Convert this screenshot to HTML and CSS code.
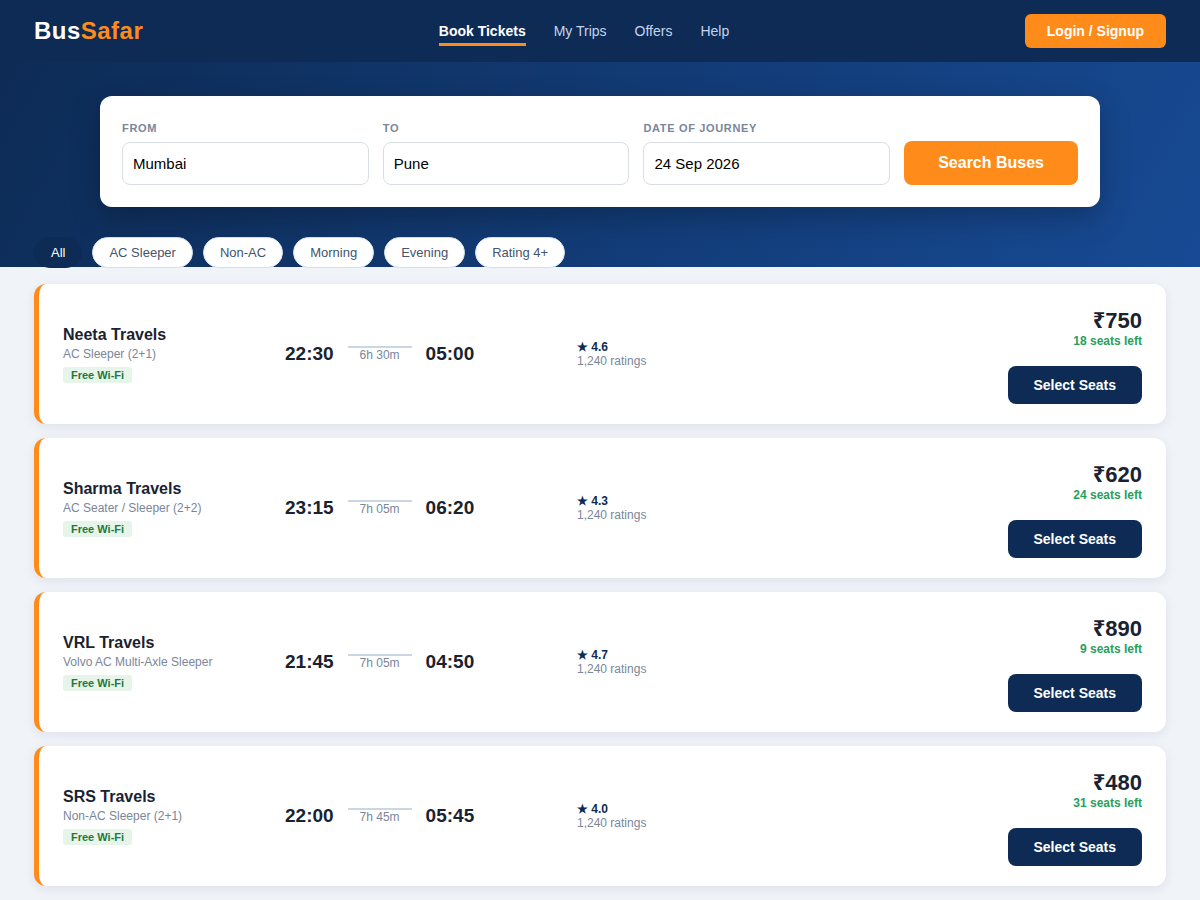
FILE: index.html
```html
<!DOCTYPE html>
<html lang="en">
<head>
    <meta charset="UTF-8">
    <meta name="viewport" content="width=device-width, initial-scale=1.0">
    <title>BusSafar</title>
    <link rel="stylesheet" href="styles.css">
</head>
<body>
    <header class="topbar">
        <div class="logo">Bus<span>Safar</span></div>
        <nav class="nav">
            <a class="active" href="#">Book Tickets</a>
            <a href="#">My Trips</a>
            <a href="#">Offers</a>
            <a href="#">Help</a>
        </nav>
        <button class="login" type="button">Login / Signup</button>
    </header>

    <section class="hero">
        <form class="search">
            <div class="field">
                <label for="from">From</label>
                <input id="from" type="text" value="Mumbai">
            </div>
            <div class="field">
                <label for="to">To</label>
                <input id="to" type="text" value="Pune">
            </div>
            <div class="field">
                <label for="date">Date of Journey</label>
                <input id="date" type="text" value="24 Sep 2026">
            </div>
            <button class="search-btn" type="button">Search Buses</button>
        </form>
    </section>

    <div class="filters">
        <button class="chip on" type="button">All</button>
        <button class="chip" type="button">AC Sleeper</button>
        <button class="chip" type="button">Non-AC</button>
        <button class="chip" type="button">Morning</button>
        <button class="chip" type="button">Evening</button>
        <button class="chip" type="button">Rating 4+</button>
    </div>

    <main class="list">
        <article class="bus">
            <div class="operator">
                <h3>Neeta Travels</h3>
                <p>AC Sleeper (2+1)</p>
                <span class="tag">Free Wi-Fi</span>
            </div>
            <div class="times">
                <b>22:30</b>
                <div class="duration">6h 30m</div>
                <b>05:00</b>
            </div>
            <div class="rating"><b>★ 4.6</b>1,240 ratings</div>
            <div class="fare">
                <div class="price">₹750</div>
                <div class="seats">18 seats left</div>
                <button class="select" type="button">Select Seats</button>
            </div>
        </article>

        <article class="bus">
            <div class="operator">
                <h3>Sharma Travels</h3>
                <p>AC Seater / Sleeper (2+2)</p>
                <span class="tag">Free Wi-Fi</span>
            </div>
            <div class="times">
                <b>23:15</b>
                <div class="duration">7h 05m</div>
                <b>06:20</b>
            </div>
            <div class="rating"><b>★ 4.3</b>1,240 ratings</div>
            <div class="fare">
                <div class="price">₹620</div>
                <div class="seats">24 seats left</div>
                <button class="select" type="button">Select Seats</button>
            </div>
        </article>

        <article class="bus">
            <div class="operator">
                <h3>VRL Travels</h3>
                <p>Volvo AC Multi-Axle Sleeper</p>
                <span class="tag">Free Wi-Fi</span>
            </div>
            <div class="times">
                <b>21:45</b>
                <div class="duration">7h 05m</div>
                <b>04:50</b>
            </div>
            <div class="rating"><b>★ 4.7</b>1,240 ratings</div>
            <div class="fare">
                <div class="price">₹890</div>
                <div class="seats">9 seats left</div>
                <button class="select" type="button">Select Seats</button>
            </div>
        </article>

        <article class="bus">
            <div class="operator">
                <h3>SRS Travels</h3>
                <p>Non-AC Sleeper (2+1)</p>
                <span class="tag">Free Wi-Fi</span>
            </div>
            <div class="times">
                <b>22:00</b>
                <div class="duration">7h 45m</div>
                <b>05:45</b>
            </div>
            <div class="rating"><b>★ 4.0</b>1,240 ratings</div>
            <div class="fare">
                <div class="price">₹480</div>
                <div class="seats">31 seats left</div>
                <button class="select" type="button">Select Seats</button>
            </div>
        </article>
    </main>
</body>
</html>
```

FILE: styles.css
```css
* {
    box-sizing: border-box;
    margin: 0;
    padding: 0;
}

body {
    background: #f0f3f8;
    color: #1a2230;
    font-family: "Liberation Sans", Arial, sans-serif;
}

button, input {
    font-family: inherit;
}

button {
    border: none;
    cursor: pointer;
}

/* Top bar */

.topbar {
    align-items: center;
    background: #0d2b55;
    display: flex;
    justify-content: space-between;
    padding: 14px 34px;
}

.logo {
    color: #fff;
    font-size: 24px;
    font-weight: bold;
    letter-spacing: 0.02em;
    line-height: 28px;
}

.logo span {
    color: #ff8c1a;
}

.nav {
    display: flex;
    gap: 28px;
}

.nav a {
    border-bottom: 3px solid transparent;
    color: #c5d4ec;
    font-size: 14px;
    line-height: 16px;
    padding: 7px 0 4px;
    text-decoration: none;
}

.nav a.active {
    border-color: #ff8c1a;
    color: #fff;
    font-weight: bold;
}

.login {
    background: #ff8c1a;
    border-radius: 6px;
    color: #fff;
    font-size: 14px;
    font-weight: bold;
    line-height: 16px;
    padding: 9px 22px;
}

/* Search */

.hero {
    background: linear-gradient(120deg, #0d2b55, #174a94);
    padding: 34px 34px 60px;
}

.search {
    align-items: end;
    background: #fff;
    border-radius: 12px;
    box-shadow: 0 10px 30px rgba(0, 0, 0, 0.25);
    display: grid;
    gap: 14px;
    grid-template-columns: 1fr 1fr 1fr auto;
    margin: 0 auto;
    max-width: 1000px;
    padding: 22px;
}

.field label {
    color: #7a869a;
    display: block;
    font-size: 11px;
    font-weight: bold;
    letter-spacing: 0.06em;
    line-height: 20px;
    margin-bottom: 4px;
    text-transform: uppercase;
}

.field input {
    background: #fff;
    border: 1px solid #d9dee4;
    border-radius: 8px;
    color: #000;
    display: block;
    font-size: 15px;
    height: 43px;
    padding: 0 10px;
    width: 100%;
}

.search-btn {
    background: #ff8c1a;
    border-radius: 8px;
    color: #fff;
    font-size: 16px;
    font-weight: bold;
    line-height: 18px;
    padding: 13px 34px;
}

/* Filters sit over the bottom edge of the hero */

.filters {
    display: flex;
    flex-wrap: wrap;
    gap: 10px;
    margin-top: -30px;
    padding: 0 34px;
}

.chip {
    background: #fff;
    border: 1px solid #d5dfec;
    border-radius: 20px;
    color: #44546c;
    font-size: 13px;
    line-height: 15px;
    padding: 7px 16px;
}

.chip.on {
    background: #0d2b55;
    border-color: #0d2b55;
    color: #fff;
}

/* Bus list */

.list {
    display: grid;
    gap: 14px;
    padding: 16px 34px 14px;
}

.bus {
    align-items: center;
    background: #fff;
    border-left: 5px solid #ff8c1a;
    border-radius: 12px;
    box-shadow: 0 3px 12px rgba(20, 30, 80, 0.08);
    display: grid;
    gap: 22px;
    grid-template-columns: 200px 270px 1fr auto;
    padding: 20px 24px;
}

.operator h3 {
    font-size: 16px;
    line-height: 20px;
}

.operator p {
    color: #7a869a;
    font-size: 12px;
    line-height: 14px;
    margin: 2px 0 6px;
}

.tag {
    background: #e6f4ea;
    border-radius: 3px;
    color: #1e7a3c;
    display: block;
    font-size: 11px;
    font-weight: bold;
    line-height: 12px;
    padding: 2px 8px;
    width: fit-content;
}

.times {
    align-items: center;
    display: flex;
    gap: 14px;
}

.times b {
    font-size: 19px;
    line-height: 22px;
}

.duration {
    border-top: 2px solid #cbd6e4;
    color: #7a869a;
    font-size: 12px;
    line-height: 14px;
    text-align: center;
    width: 64px;
}

.rating {
    color: #7a869a;
    font-size: 12px;
    line-height: 14px;
}

.rating b {
    color: #0d2b55;
    display: block;
}

.fare {
    text-align: right;
}

.price {
    font-family: "Liberation Sans", "Noto Sans", Arial, sans-serif;
    font-size: 22px;
    font-weight: bold;
    line-height: normal;
}

.seats {
    color: #27a05a;
    font-size: 12px;
    font-weight: bold;
    line-height: 14px;
    margin-bottom: 18px;
}

.select {
    background: #0d2b55;
    border-radius: 8px;
    color: #fff;
    display: block;
    font-size: 14px;
    font-weight: bold;
    line-height: 16px;
    margin-left: auto;
    padding: 11px 26px;
}
```
